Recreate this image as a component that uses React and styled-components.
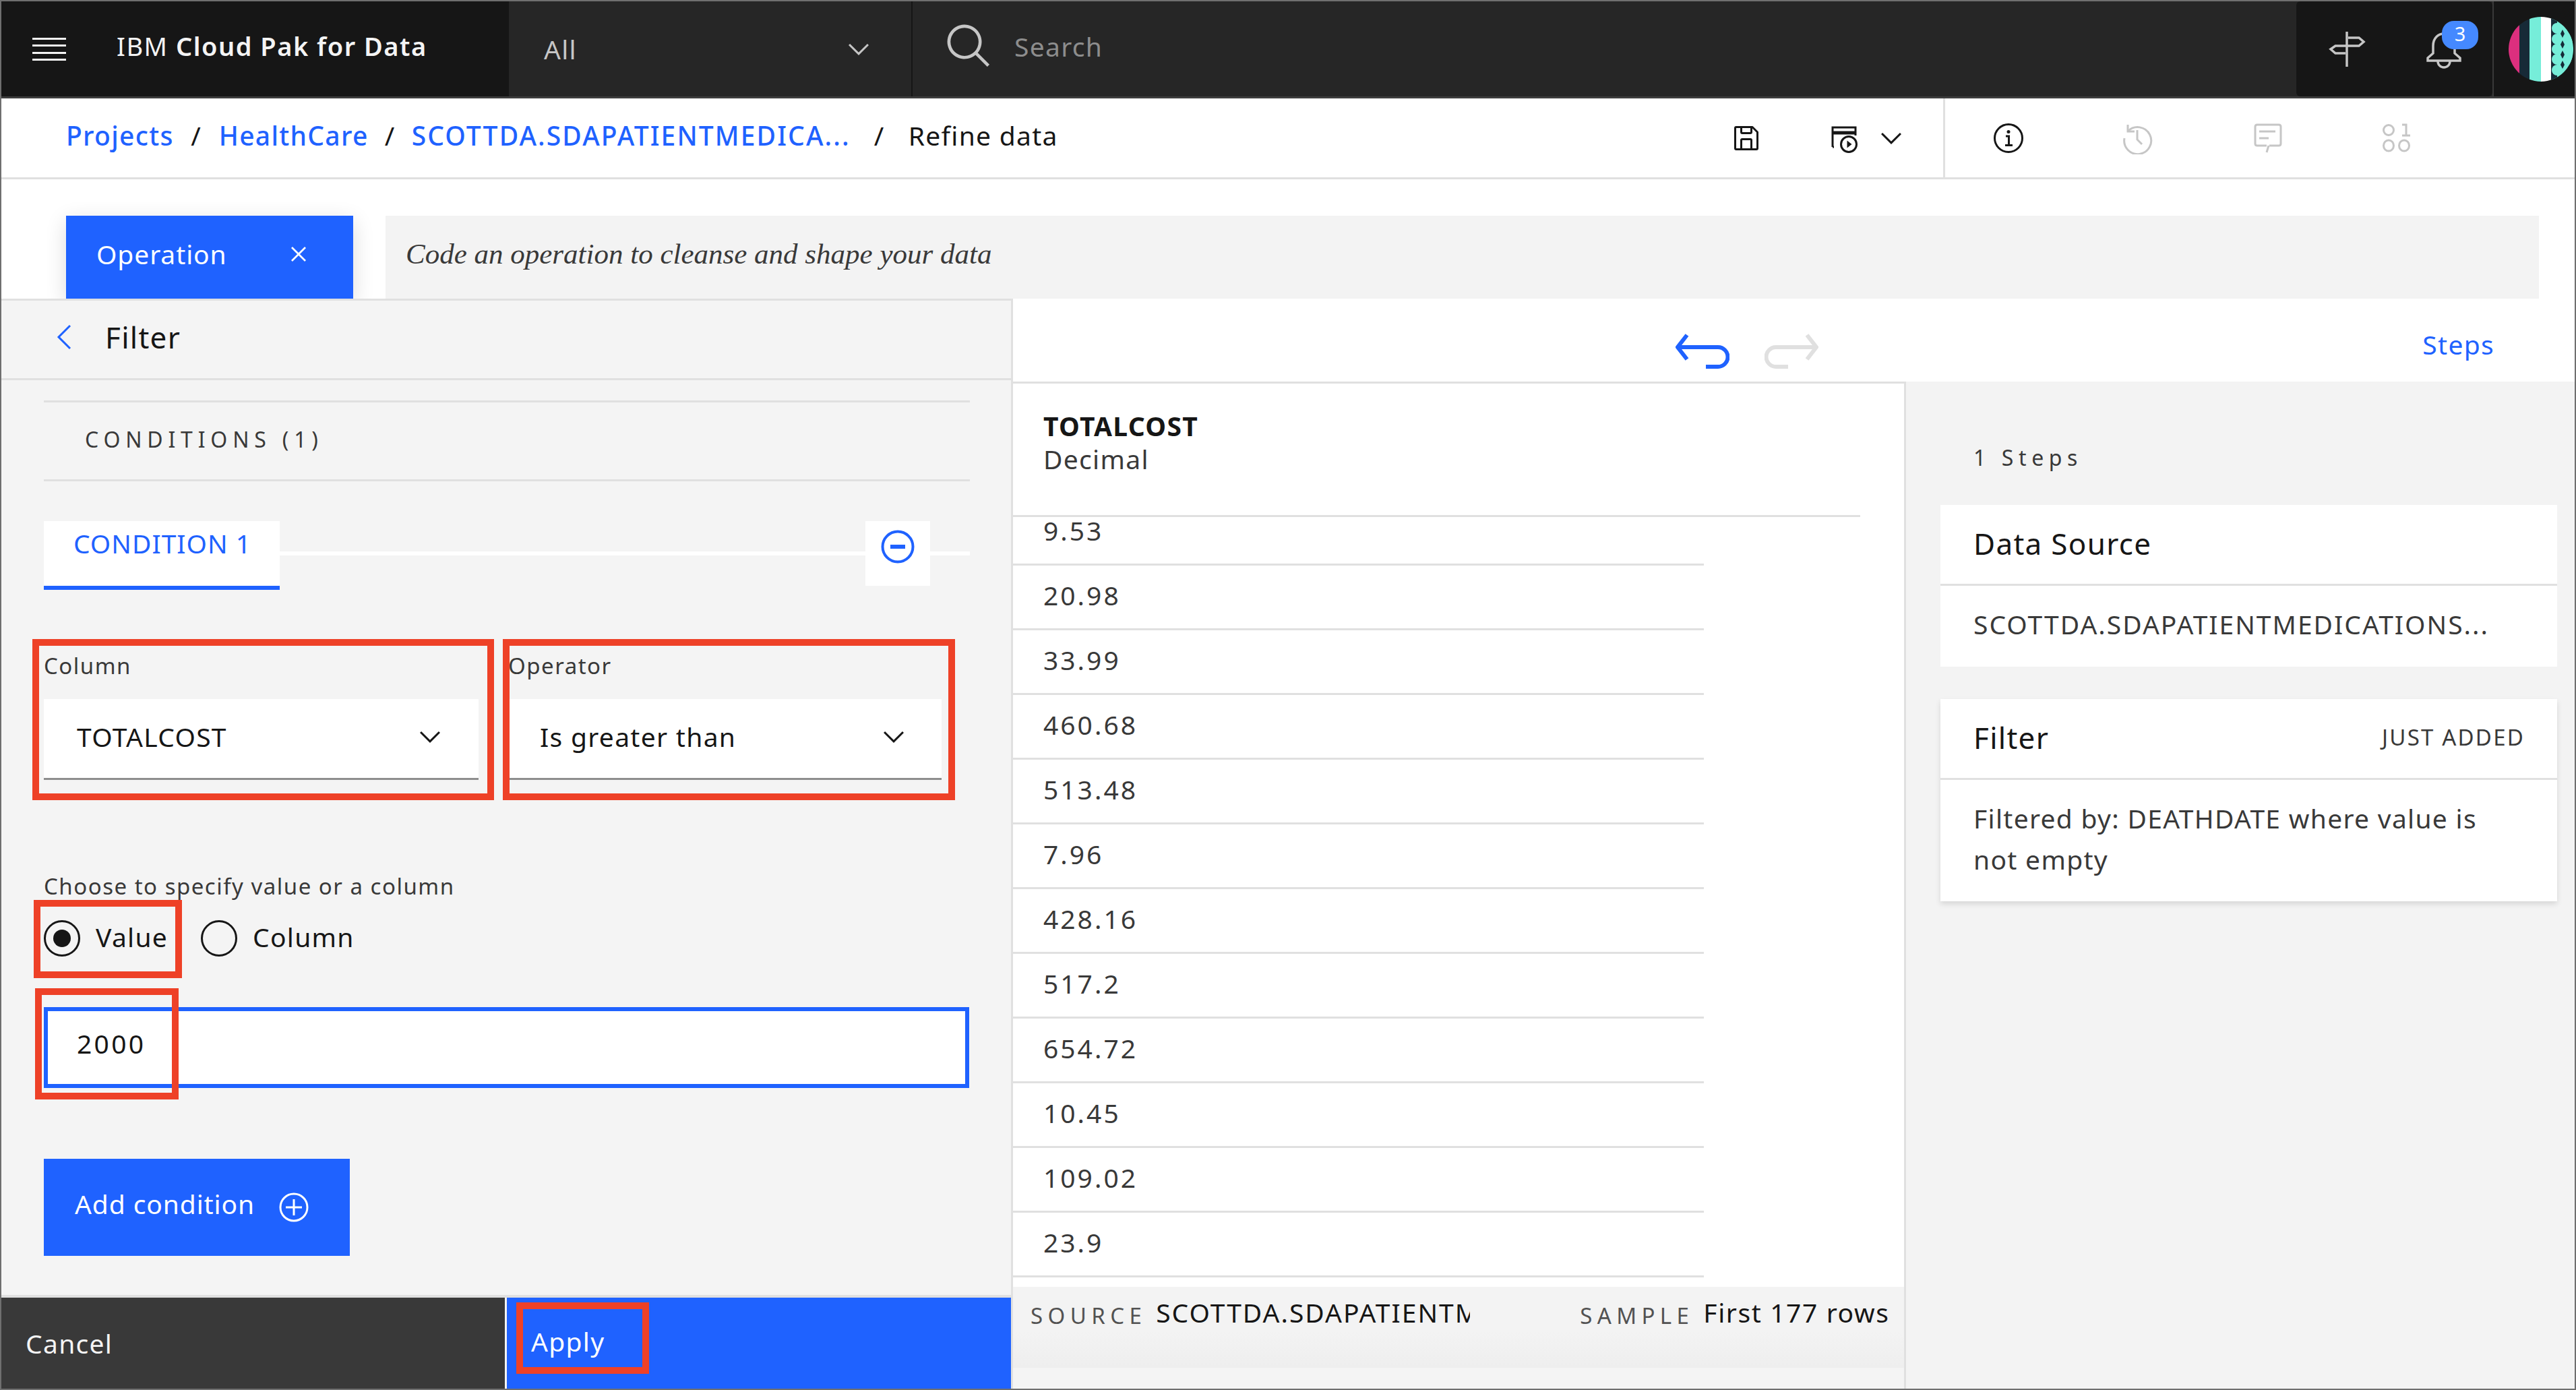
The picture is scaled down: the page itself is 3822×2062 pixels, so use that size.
import styled, { createGlobalStyle } from 'styled-components';

const BLUE_FILL = '#1f62ff';
const RED = '#ee4127';
const LINE = '#e0e0e0';
const PANEL = '#f4f4f4';

const GlobalStyle = createGlobalStyle`
  html, body {
    margin: 0;
    padding: 0;
    background: #fff;
  }
  * {
    box-sizing: border-box;
  }
  body {
    font-family: "Noto Sans", "Open Sans", sans-serif;
    font-size: 39px;
    letter-spacing: 1.3px;
    color: #161616;
  }
`;

const Frame = styled.div`
  width: 3822px;
  height: 2062px;
  display: flex;
  flex-direction: column;
  overflow: hidden;
  border: 2px solid #6f6f6f;
`;

/* top bar */
const Header = styled.header`
  display: flex;
  flex: none;
  height: 144px;
  background: #262626;
  border-bottom: 3px solid #3d3d3d;
`;

const Brand = styled.div`
  display: flex;
  flex: none;
  align-items: center;
  width: 753px;
  padding-left: 46px;
  background: #161616;
`;

const BrandName = styled.div`
  margin-left: 75px;
  margin-top: -10px;
  color: #f4f4f4;
  font-size: 38px;
  font-weight: 600;
  letter-spacing: 1.5px;
  span {
    font-weight: 400;
  }
`;

const Scope = styled.div`
  display: flex;
  flex: none;
  align-items: center;
  justify-content: space-between;
  width: 599px;
  padding: 0 54px 0 52px;
  border-right: 2px solid #161616;
  color: #c6c6c6;
`;

const SearchBox = styled.div`
  display: flex;
  flex: 1;
  align-items: center;
  padding: 0 0 8px 47px;
  gap: 30px;
  color: #8d8d8d;
`;

const HeaderTools = styled.div`
  position: relative;
  display: flex;
  flex: none;
  width: 291px;
  border-radius: 6px;
  background: #161616;
  align-items: center;
`;

const NoticeBadge = styled.span`
  position: absolute;
  left: 216px;
  top: 29px;
  width: 54px;
  height: 42px;
  border-radius: 18px;
  background: #4589ff;
  color: #fff;
  font-size: 29px;
  letter-spacing: 0;
  line-height: 38px;
  text-align: center;
`;

const AvatarSlot = styled.div`
  display: flex;
  flex: none;
  width: 122px;
  align-items: center;
  padding-left: 22px;
  background: #161616;
  border-left: 2px solid #393939;
`;

/* breadcrumb bar */
const CrumbBar = styled.div`
  display: flex;
  flex: none;
  height: 120px;
  align-items: stretch;
  border-bottom: 3px solid ${LINE};
`;

const Crumbs = styled.nav`
  display: flex;
  flex: 1;
  align-items: center;
  padding-left: 96px;
  padding-bottom: 8px;
`;

const Crumb = styled.a`
  color: ${BLUE_FILL};
  font-weight: 500;
  letter-spacing: ${(p) => p.$track || 1.3}px;
`;

const Slash = styled.span`
  width: ${(p) => p.$width}px;
  text-align: center;
  color: #161616;
`;

const SaveTools = styled.div`
  display: flex;
  align-items: center;
  padding-right: 53px;
`;

const ViewTools = styled.div`
  display: flex;
  align-items: center;
  gap: 144px;
  width: 937px;
  padding-left: 70px;
  border-left: 3px solid ${LINE};
`;

const IconSlot = styled.span`
  display: flex;
  flex: none;
  align-items: center;
  justify-content: center;
  width: ${(p) => p.$size || 48}px;
  height: 48px;
  margin-left: ${(p) => p.$left || 0}px;
  margin-top: ${(p) => p.$top || 0}px;
  color: ${(p) => (p.$muted ? '#c6c6c6' : '#161616')};
`;

/* operation row */
const OperationRow = styled.div`
  display: flex;
  flex: none;
  height: 177px;
  padding: 54px 53px 0 96px;
  gap: 48px;
`;

const OperationButton = styled.button`
  display: flex;
  flex: none;
  align-items: center;
  justify-content: space-between;
  width: 426px;
  padding: 0 59px 10px 45px;
  border: 0;
  background: ${BLUE_FILL};
  color: #fff;
  font: inherit;
  letter-spacing: 0.9px;
  box-shadow: 0 8px 30px rgba(0, 0, 0, 0.14);
`;

const CodeBar = styled.div`
  display: flex;
  flex: 1;
  align-items: center;
  padding: 0 0 10px 30px;
  background: #f3f3f3;
  color: #393939;
  font-family: "Liberation Serif", serif;
  font-style: italic;
  font-size: 43px;
  letter-spacing: 0;
`;

/* main */
const Workspace = styled.div`
  position: relative;
  display: flex;
  flex: 1;
  min-height: 0;
`;

const LeftPanel = styled.section`
  display: flex;
  flex: none;
  flex-direction: column;
  width: 1501px;
  background: ${PANEL};
  border-top: 3px solid ${LINE};
  border-right: 3px solid ${LINE};
`;

const PanelTitle = styled.div`
  display: flex;
  flex: none;
  align-items: center;
  height: 118px;
  padding: 0 0 8px 82px;
  gap: 50px;
  border-bottom: 3px solid ${LINE};
  font-size: 44px;
`;

const ConditionsHead = styled.div`
  flex: none;
  height: 120px;
  margin: 30px 61px 0 63px;
  padding-left: 61px;
  border-top: 3px solid ${LINE};
  border-bottom: 3px solid ${LINE};
  color: #393939;
  font-size: 32px;
  line-height: 110px;
  letter-spacing: 7.8px;
`;

const TabRow = styled.div`
  display: flex;
  flex: none;
  height: 102px;
  margin: 59px 61px 0 63px;
`;

const Tab = styled.div`
  flex: none;
  width: 350px;
  padding-left: 44px;
  background: #fff;
  border-bottom: 6px solid ${BLUE_FILL};
  color: ${BLUE_FILL};
  line-height: 66px;
  letter-spacing: 1px;
`;

const TabLine = styled.div`
  flex: ${(p) => (p.$fill ? 1 : 'none')};
  width: ${(p) => (p.$fill ? 'auto' : '59px')};
  height: 6px;
  margin-top: 45px;
  background: #fff;
`;

const RemoveButton = styled.div`
  display: flex;
  flex: none;
  align-items: center;
  justify-content: center;
  width: 96px;
  height: 96px;
  padding-bottom: 20px;
  background: #fff;
`;

const FieldRow = styled.div`
  display: flex;
  flex: none;
  gap: 13px;
  margin: 73px 0 0 46px;
`;

const FieldBox = styled.div`
  width: ${(p) => p.$width}px;
  height: 239px;
  padding: 10px ${(p) => p.$right}px 0 ${(p) => p.$left}px;
  border: 10px solid ${RED};
`;

const FieldLabel = styled.div`
  height: 69px;
  margin-left: ${(p) => p.$indent || 0}px;
  margin-top: -3px;
  margin-bottom: 3px;
  padding-top: 2px;
  color: #393939;
  font-size: 33px;
  letter-spacing: 1.5px;
  line-height: 42px;
`;

const SelectBox = styled.div`
  display: flex;
  align-items: center;
  justify-content: space-between;
  height: 120px;
  padding: 0 ${(p) => p.$right}px 6px ${(p) => p.$left}px;
  background: #fff;
  border-bottom: 3px solid #8d8d8d;
`;

const ChoiceLabel = styled.div`
  flex: none;
  margin: 110px 0 0 63px;
  height: 38px;
  color: #393939;
  font-size: 33px;
  letter-spacing: 1.5px;
  line-height: 36px;
`;

const RadioRow = styled.div`
  display: flex;
  flex: none;
  align-items: center;
  margin-left: 48px;
`;

const RadioBox = styled.div`
  display: flex;
  align-items: center;
  gap: ${(p) => p.$gap}px;
  height: 116px;
  width: ${(p) => p.$width}px;
  padding-left: ${(p) => p.$left}px;
  border: ${(p) => (p.$marked ? `10px solid ${RED}` : '0')};
  margin-left: ${(p) => p.$shift || 0}px;
`;

const RadioText = styled.span`
  margin-top: -8px;
`;

const RadioDot = styled.span`
  display: flex;
  flex: none;
  align-items: center;
  justify-content: center;
  width: 54px;
  height: 54px;
  margin-top: -2px;
  border: 3px solid #161616;
  border-radius: 50%;
  &::after {
    content: '';
    display: ${(p) => (p.$on ? 'block' : 'none')};
    width: 26px;
    height: 26px;
    border-radius: 50%;
    background: #161616;
  }
`;

const ValueInput = styled.div`
  position: relative;
  flex: none;
  display: flex;
  align-items: center;
  width: 1373px;
  height: 120px;
  margin: 43px 0 0 63px;
  padding: 0 0 14px 43px;
  background: #fff;
  border: 6px solid ${BLUE_FILL};
  letter-spacing: 3.3px;
`;

const ValueMark = styled.span`
  position: absolute;
  left: -19px;
  top: -34px;
  width: 213px;
  height: 165px;
  border: 10px solid ${RED};
`;

const AddButton = styled.button`
  display: flex;
  flex: none;
  align-items: center;
  width: 454px;
  height: 144px;
  margin: 105px 0 0 63px;
  padding: 0 0 0 46px;
  gap: 36px;
  border: 0;
  background: ${BLUE_FILL};
  color: #fff;
  font: inherit;
  letter-spacing: 0.9px;
  span {
    margin-top: -12px;
  }
  svg {
    flex: none;
  }
`;

const PanelActions = styled.div`
  display: flex;
  flex: none;
  height: 139px;
  margin-top: auto;
  border-top: 4px solid ${LINE};
`;

const CancelAction = styled.div`
  display: flex;
  align-items: center;
  width: 747px;
  padding: 0 0 0 36px;
  background: #393939;
  color: #f4f4f4;
`;

const ApplyAction = styled.div`
  display: flex;
  flex: 1;
  align-items: flex-start;
  margin-left: 3px;
  padding: 7px 0 0 14px;
  background: ${BLUE_FILL};
  color: #fff;
`;

const ApplyMark = styled.span`
  display: flex;
  align-items: center;
  width: 197px;
  height: 106px;
  padding: 8px 0 0 12px;
  border: 10px solid ${RED};
`;

/* data side */
const DataSide = styled.section`
  display: flex;
  flex: 1;
  flex-direction: column;
  min-width: 0;
`;

const HistoryBar = styled.div`
  display: flex;
  flex: none;
  align-items: center;
  height: 123px;
  padding: 34px 119px 0 983px;
  gap: 52px;
`;

const StepsLink = styled.a`
  margin-left: auto;
  margin-top: -22px;
  color: ${BLUE_FILL};
`;

const DataBody = styled.div`
  display: flex;
  flex: 1;
  min-height: 0;
`;

const DataColumn = styled.div`
  display: flex;
  flex: none;
  flex-direction: column;
  width: 1325px;
  border-top: 3px solid ${LINE};
  border-right: 3px solid ${LINE};
`;

const ColumnHead = styled.div`
  flex: none;
  position: relative;
  z-index: 1;
  width: 1257px;
  height: 198px;
  padding: 38px 0 0 45px;
  background: #fff;
  border-bottom: 3px solid ${LINE};
  line-height: 49px;
  color: #393939;
  b {
    display: block;
    color: #161616;
    font-weight: 700;
  }
`;

const RowsView = styled.div`
  flex: none;
  height: 1166px;
  margin-top: -24px;
  overflow: hidden;
`;

const DataRow = styled.div`
  display: flex;
  align-items: center;
  width: 1025px;
  height: 96px;
  padding: 0 0 6px 45px;
  border-bottom: 3px solid ${LINE};
  color: #393939;
  letter-spacing: 3px;
`;

const SourceBar = styled.div`
  display: flex;
  flex: none;
  align-items: flex-start;
  height: 120px;
  padding: 13px 0 0 26px;
  background: linear-gradient(#f3f3f3 55%, #eeeeee);
  line-height: 50px;
`;

const ColumnFoot = styled.div`
  flex: 1;
  background: #f4f4f4;
`;

const SourceTag = styled.span`
  flex: none;
  margin-right: 14px;
  color: #525252;
  font-size: 33px;
  letter-spacing: 7.4px;
  padding-top: 5px;
`;

const SourceName = styled.span`
  width: 466px;
  margin-right: 163px;
  overflow: hidden;
  white-space: nowrap;
  letter-spacing: 2px;
`;

const SampleText = styled.span`
  letter-spacing: 1.6px;
  white-space: nowrap;
`;

const StepsPanel = styled.aside`
  flex: 1;
  padding: 0 26px 0 51px;
  background: #f3f3f3;
`;

const StepsCount = styled.div`
  height: 183px;
  padding: 92px 0 0 49px;
  color: #393939;
  font-size: 32px;
  line-height: 42px;
  letter-spacing: 7.6px;
`;

const StepCard = styled.div`
  height: ${(p) => p.$height}px;
  margin-bottom: 48px;
  background: #fff;
  box-shadow: ${(p) => (p.$raised ? '0 4px 8px rgba(0, 0, 0, 0.12)' : 'none')};
`;

const StepHead = styled.div`
  display: flex;
  align-items: center;
  justify-content: space-between;
  height: 120px;
  padding: 0 48px 4px 49px;
  border-bottom: 3px solid ${LINE};
  font-size: 44px;
`;

const JustAdded = styled.span`
  color: #393939;
  font-size: 33px;
  letter-spacing: 2.2px;
`;

const StepText = styled.div`
  padding: 26px 30px 0 49px;
  color: #393939;
  line-height: 61px;
  white-space: pre-line;
  letter-spacing: ${(p) => p.$track || 1.3}px;
`;

const Chevron = ({ size = 48, color = 'currentColor' }) => (
  <svg width={size} height={size} viewBox="0 0 32 32" fill={color}>
    <path d="M16 22L6 12l1.4-1.4 8.6 8.6 8.6-8.6L26 12z" />
  </svg>
);

const Hamburger = () => (
  <svg width="50" height="36" viewBox="0 0 50 36" fill="#f4f4f4">
    <rect y="1" width="50" height="3" />
    <rect y="11" width="50" height="3" />
    <rect y="22" width="50" height="3" />
    <rect y="32" width="50" height="3" />
  </svg>
);

const SearchIcon = () => (
  <svg width="74" height="74" viewBox="0 0 32 32" fill="#c6c6c6">
    <path d="M29 27.5859l-7.5521-7.5521a11.0177 11.0177 0 1 0-1.4141 1.4141L27.5859 29ZM4 13a9 9 0 1 1 9 9A9.01 9.01 0 0 1 4 13Z" />
  </svg>
);

const SignpostIcon = () => (
  <svg width="62" height="62" viewBox="153 42 62 62" fill="none" stroke="#c6c6c6" strokeWidth="3.5">
    <path d="M182 47V99" />
    <path d="M184 56H200L207 62L200 68H165L158 73L165 79H180" />
  </svg>
);

const BellIcon = () => (
  <svg width="56" height="58" viewBox="298 46 56 58" fill="none" stroke="#c6c6c6" strokeWidth="3.5">
    <path d="M302 90V86L310 79V68C310 56 318 50 326 50C334 50 342 56 342 68V79L350 86V90Z" />
    <path d="M317 91a9 9 0 0 0 18 0" />
  </svg>
);

const Avatar = () => (
  <svg width="96" height="96" viewBox="0 0 96 96">
    <defs>
      <clipPath id="avatarClip">
        <circle cx="48" cy="48" r="48" />
      </clipPath>
    </defs>
    <g clipPath="url(#avatarClip)">
      <rect width="16" height="96" fill="#dc2f7e" />
      <rect x="16" width="15" height="96" fill="#172a37" />
      <rect x="31" width="17" height="96" fill="#76edd9" />
      <rect x="48" width="15" height="96" fill="#fff" />
      <rect x="63" width="33" height="96" fill="#76edd9" />
      <rect x="63" width="9" height="96" fill="#172a37" />
      {[17, 33, 48, 63, 79].map((y) => (
        <circle key={y} cx="72" cy={y} r="8" fill="#76edd9" />
      ))}
      {[33, 48, 63].map((y) => (
        <circle key={y} cx="88" cy={y} r="8" fill="#76edd9" />
      ))}
      {[25, 41, 56, 71].map((y) => (
        <path key={y} d={`M80 ${y - 6}L83 ${y}L80 ${y + 6}L77 ${y}Z`} fill="#172a37" />
      ))}
    </g>
  </svg>
);

const CloseIcon = () => (
  <svg width="44" height="44" viewBox="0 0 32 32" fill="#fff">
    <path d="M24 9.4L22.6 8 16 14.6 9.4 8 8 9.4 14.6 16 8 22.6 9.4 24 16 17.4 22.6 24 24 22.6 17.4 16 24 9.4z" />
  </svg>
);

const SaveIcon = () => (
  <svg width="48" height="48" viewBox="0 0 32 32" fill="currentColor">
    <path d="M27.71 9.29l-5-5A1 1 0 0 0 22 4H6a2 2 0 0 0-2 2v20a2 2 0 0 0 2 2h20a2 2 0 0 0 2-2V10a1 1 0 0 0-.29-.71zM12 6h8v4h-8zm8 20h-8v-8h8zm2 0v-8a2 2 0 0 0-2-2h-8a2 2 0 0 0-2 2v8H6V6h4v4a2 2 0 0 0 2 2h8a2 2 0 0 0 2-2V6.41l4 4V26z" />
  </svg>
);

const RunIcon = () => (
  <svg width="48" height="48" viewBox="0 0 48 48" fill="none" stroke="currentColor" strokeWidth="3">
    <path d="M7 37V8H41V20" />
    <path d="M7 16H41" strokeWidth="5" />
    <path d="M7 37H9" />
    <circle cx="31" cy="33" r="11.5" />
    <path d="M28.5 27.5L35.5 33L28.5 38.5Z" fill="currentColor" stroke="none" />
  </svg>
);

const InfoIcon = () => (
  <svg width="48" height="48" viewBox="0 0 48 48" fill="none" stroke="currentColor" strokeWidth="3">
    <circle cx="24" cy="24" r="20.5" />
    <path d="M20 21H24.5V34M19 34.5H30" />
    <circle cx="24" cy="14.5" r="2.5" fill="currentColor" stroke="none" />
  </svg>
);

const HistoryIcon = () => (
  <svg width="48" height="48" viewBox="0 0 48 48" fill="none" stroke="currentColor" strokeWidth="3">
    <path d="M9 4V14H19" />
    <path d="M9.5 13.5A20 20 0 1 1 4 24" />
    <path d="M23 12V26L30 33" />
  </svg>
);

const ChatIcon = () => (
  <svg width="48" height="48" viewBox="0 0 48 48" fill="none" stroke="currentColor" strokeWidth="3">
    <path d="M26 35L23 45M23 35H9Q6 35 6 32V7Q6 4 9 4H41Q44 4 44 7V32Q44 35 41 35H27" />
    <path d="M12 14H36M12 24H26" />
  </svg>
);

const BinaryIcon = () => (
  <svg width="48" height="48" viewBox="0 0 48 48" fill="none" stroke="currentColor" strokeWidth="3">
    <ellipse cx="12" cy="12" rx="7.5" ry="7.5" />
    <path d="M32 4H38V20M32 20H44" />
    <ellipse cx="12" cy="35" rx="7.5" ry="8" />
    <ellipse cx="35" cy="35" rx="7.5" ry="8" />
  </svg>
);

const UndoIcon = ({ color, flip }) => (
  <svg
    width="80"
    height="54"
    viewBox="0 0 80 54"
    fill="none"
    stroke={color}
    strokeWidth="6"
    style={flip ? { transform: 'scaleX(-1)' } : undefined}
  >
    <path d="M17 2L3 20L17 38M3 20H63a13 13 0 0 1 0 29H45" />
  </svg>
);

const MinusIcon = () => (
  <svg width="50" height="50" viewBox="0 0 50 50" fill="none" stroke={BLUE_FILL} strokeWidth="4">
    <circle cx="25" cy="25" r="22.5" />
    <path d="M14 25H36" strokeWidth="6" />
  </svg>
);

const PlusIcon = () => (
  <svg width="44" height="44" viewBox="0 0 44 44" fill="none" stroke="#fff" strokeWidth="3">
    <circle cx="22" cy="22" r="20" />
    <path d="M22 10V34M10 22H34" />
  </svg>
);

const BackIcon = () => (
  <svg width="22" height="38" viewBox="0 0 22 38" fill="none" stroke={BLUE_FILL} strokeWidth="3">
    <path d="M20 2L3 19L20 36" />
  </svg>
);

const values = ['9.53', '20.98', '33.99', '460.68', '513.48', '7.96', '428.16', '517.2', '654.72', '10.45', '109.02', '23.9'];

export default function App() {
  return (
    <Frame>
      <GlobalStyle />
      <Header>
        <Brand>
          <Hamburger />
          <BrandName>
            <span>IBM</span> Cloud Pak for Data
          </BrandName>
        </Brand>
        <Scope>
          <span>All</span>
          <Chevron />
        </Scope>
        <SearchBox>
          <SearchIcon />
          <span>Search</span>
        </SearchBox>
        <HeaderTools>
          <IconSlot $size={62} $left={46}>
            <SignpostIcon />
          </IconSlot>
          <IconSlot $size={56} $left={83} $top={5}>
            <BellIcon />
          </IconSlot>
          <NoticeBadge>3</NoticeBadge>
        </HeaderTools>
        <AvatarSlot>
          <Avatar />
        </AvatarSlot>
      </Header>

      <CrumbBar>
        <Crumbs>
          <Crumb>Projects</Crumb>
          <Slash $width={67}>/</Slash>
          <Crumb>HealthCare</Crumb>
          <Slash $width={64}>/</Slash>
          <Crumb $track={2.1}>SCOTTDA.SDAPATIENTMEDICA...</Crumb>
          <Slash $width={86}>/</Slash>
          <span>Refine data</span>
        </Crumbs>
        <SaveTools>
          <IconSlot>
            <SaveIcon />
          </IconSlot>
          <IconSlot $left={97}>
            <RunIcon />
          </IconSlot>
          <IconSlot $left={22}>
            <Chevron />
          </IconSlot>
        </SaveTools>
        <ViewTools>
          <IconSlot>
            <InfoIcon />
          </IconSlot>
          <IconSlot $muted>
            <HistoryIcon />
          </IconSlot>
          <IconSlot $muted>
            <ChatIcon />
          </IconSlot>
          <IconSlot $muted>
            <BinaryIcon />
          </IconSlot>
        </ViewTools>
      </CrumbBar>

      <OperationRow>
        <OperationButton>
          Operation
          <CloseIcon />
        </OperationButton>
        <CodeBar>Code an operation to cleanse and shape your data</CodeBar>
      </OperationRow>

      <Workspace>
        <LeftPanel>
          <PanelTitle>
            <BackIcon />
            Filter
          </PanelTitle>
          <ConditionsHead>CONDITIONS (1)</ConditionsHead>
          <TabRow>
            <Tab>CONDITION 1</Tab>
            <TabLine $fill />
            <RemoveButton>
              <MinusIcon />
            </RemoveButton>
            <TabLine />
          </TabRow>
          <FieldRow>
            <FieldBox $width={685} $left={7} $right={13}>
              <FieldLabel>Column</FieldLabel>
              <SelectBox $left={49} $right={48}>
                TOTALCOST
                <Chevron />
              </SelectBox>
            </FieldBox>
            <FieldBox $width={671} $left={0} $right={10}>
              <FieldLabel $indent={-2}>Operator</FieldLabel>
              <SelectBox $left={45} $right={47}>
                Is greater than
                <Chevron />
              </SelectBox>
            </FieldBox>
          </FieldRow>
          <ChoiceLabel>Choose to specify value or a column</ChoiceLabel>
          <RadioRow>
            <RadioBox $marked $width={220} $left={5} $gap={23}>
              <RadioDot $on />
              <RadioText>Value</RadioText>
            </RadioBox>
            <RadioBox $width={300} $left={0} $gap={23} $shift={28}>
              <RadioDot />
              <RadioText>Column</RadioText>
            </RadioBox>
          </RadioRow>
          <ValueInput>
            2000
            <ValueMark />
          </ValueInput>
          <AddButton>
            <span>Add condition</span>
            <PlusIcon />
          </AddButton>
          <PanelActions>
            <CancelAction>Cancel</CancelAction>
            <ApplyAction>
              <ApplyMark>Apply</ApplyMark>
            </ApplyAction>
          </PanelActions>
        </LeftPanel>

        <DataSide>
          <HistoryBar>
            <UndoIcon color={BLUE_FILL} />
            <UndoIcon color={LINE} flip />
            <StepsLink>Steps</StepsLink>
          </HistoryBar>
          <DataBody>
            <DataColumn>
              <ColumnHead>
                <b>TOTALCOST</b>
                Decimal
              </ColumnHead>
              <RowsView>
                {values.map((v) => (
                  <DataRow key={v}>{v}</DataRow>
                ))}
              </RowsView>
              <SourceBar>
                <SourceTag>SOURCE</SourceTag>
                <SourceName>SCOTTDA.SDAPATIENTMEDICATIONS</SourceName>
                <SourceTag>SAMPLE</SourceTag>
                <SampleText>First 177 rows</SampleText>
              </SourceBar>
              <ColumnFoot />
            </DataColumn>
            <StepsPanel>
              <StepsCount>1 Steps</StepsCount>
              <StepCard $height={240}>
                <StepHead>Data Source</StepHead>
                <StepText $track={2}>SCOTTDA.SDAPATIENTMEDICATIONS...</StepText>
              </StepCard>
              <StepCard $height={300} $raised>
                <StepHead>
                  Filter
                  <JustAdded>JUST ADDED</JustAdded>
                </StepHead>
                <StepText>{'Filtered by: DEATHDATE where value is\nnot empty'}</StepText>
              </StepCard>
            </StepsPanel>
          </DataBody>
        </DataSide>
      </Workspace>
    </Frame>
  );
}
